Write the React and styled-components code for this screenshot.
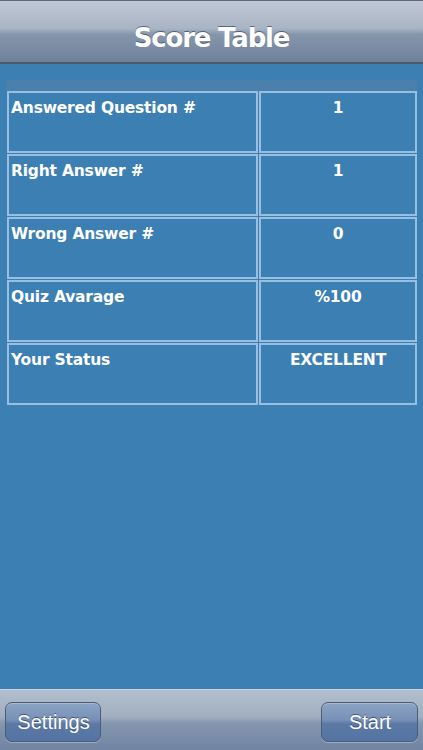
import React from "react";
import styled, { createGlobalStyle } from "styled-components";

const Global = createGlobalStyle`
  html, body { margin: 0; padding: 0; }
  body { background: #3c7fb3; }
  #root { min-height: 100vh; }
`;

const Page = styled.div`
  min-height: 100vh;
  display: flex;
  flex-direction: column;
  background: #3c7fb3;
  font-family: "DejaVu Sans", Verdana, sans-serif;
`;

const NavBar = styled.header`
  height: 61px;
  border-top: 1px solid #5d6a7c;
  border-bottom: 2px solid #4d5869;
  background: linear-gradient(#c0c8d4 0%, #a9b4c4 45%, #8595ab 55%, #6f819b 100%);
  display: flex;
  align-items: center;
  justify-content: center;
  padding-top: 12px;
  box-sizing: border-box;
  height: 64px;
`;

const Title = styled.h1`
  margin: 0;
  color: #fff;
  font-size: 26px;
  font-weight: bold;
  letter-spacing: -1.2px;
  text-shadow: 0 -1px 0 rgba(40, 50, 70, 0.6);
`;

const Content = styled.main`
  flex: 1;
  padding: 16px 6px 0 6px;
`;

const Caption = styled.div`
  height: 11px;
  width: 411px;
  background: #4b80ad;
`;

const Grid = styled.div`
  display: grid;
  grid-template-columns: 251px 158px;
  grid-auto-rows: 62px;
  gap: 1px;
  padding-left: 1px;
`;

const Cell = styled.div`
  border: 2px solid #98bfe2;
  box-sizing: border-box;
  padding: 6px 2px;
  color: #fff;
  font-weight: bold;
  font-size: 15.5px;
  letter-spacing: -0.2px;
  text-align: ${(p) => (p.$center ? "center" : "left")};
  white-space: nowrap;
`;

const ToolBar = styled.footer`
  height: 60px;
  border-top: 1px solid #c9d3df;
  background: linear-gradient(#b3bfce 0%, #a0aebf 45%, #8596ae 55%, #7084a2 100%);
  display: flex;
  align-items: center;
  justify-content: space-between;
  padding: 0 5px;
`;

const Button = styled.button`
  width: ${(p) => p.$w}px;
  height: 40px;
  border-radius: 7px;
  border: 1px solid #4c5b77;
  background: linear-gradient(#8ca4c4 0%, #7690b6 45%, #5b79a5 55%, #5474a3 100%);
  box-shadow: inset 0 1px 0 rgba(255, 255, 255, 0.25), 0 1px 0 rgba(255, 255, 255, 0.3);
  color: #fff;
  font-family: "Liberation Sans", Arial, sans-serif;
  font-size: 20px;
  text-shadow: 0 -1px 0 rgba(30, 40, 60, 0.6);
  padding: 0 0 0 1px;
  margin-top: 4px;
`;

const rows = [
  ["Answered Question #", "1"],
  ["Right Answer #", "1"],
  ["Wrong Answer #", "0"],
  ["Quiz Avarage", "%100"],
  ["Your Status", "EXCELLENT"],
];

export default function App() {
  return (
    <Page>
      <Global />
      <NavBar>
        <Title>Score Table</Title>
      </NavBar>
      <Content>
        <Caption />
        <Grid>
          {rows.map(([label, value]) => (
            <React.Fragment key={label}>
              <Cell>{label}</Cell>
              <Cell $center>{value}</Cell>
            </React.Fragment>
          ))}
        </Grid>
      </Content>
      <ToolBar>
        <Button $w={96}>Settings</Button>
        <Button $w={97}>Start</Button>
      </ToolBar>
    </Page>
  );
}
